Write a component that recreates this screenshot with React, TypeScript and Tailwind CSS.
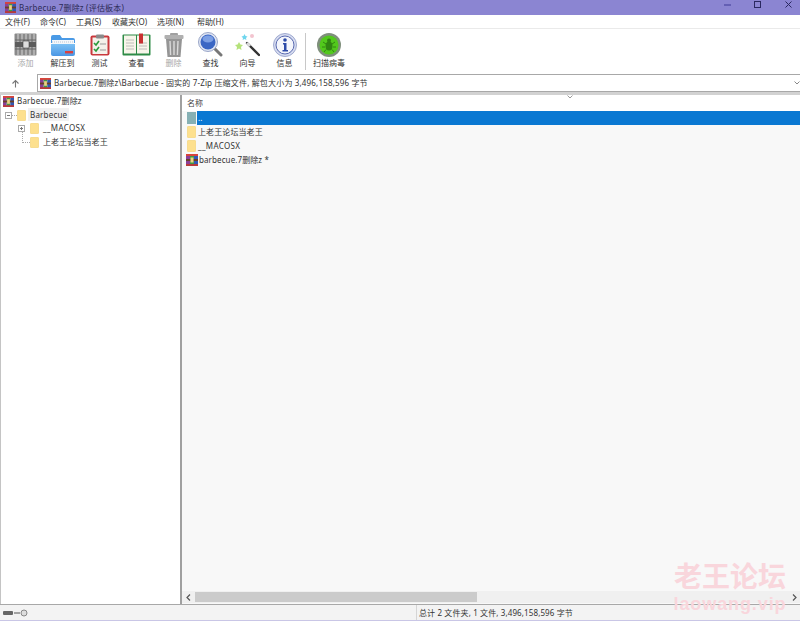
import React from "react";

const font = { fontFamily: '"Noto Sans", "Noto Sans CJK SC", "Liberation Sans", sans-serif' };

function Rar({ s = 12 }: { s?: number }) {
  return (
    <svg width={s} height={s} viewBox="0 0 12 12" className="shrink-0">
      <rect x="0" y="0" width="4" height="12" fill="#8a3f98" />
      <rect x="4" y="0" width="4" height="12" fill="#3f9a45" />
      <rect x="8" y="0" width="4" height="12" fill="#3258b4" />
      <rect x="0" y="0" width="12" height="2" fill="#d8443a" />
      <rect x="0" y="5" width="12" height="2" fill="#6a4028" />
      <rect x="4.500" y="3.500" width="3" height="5" fill="#ecd084" />
      <rect x="0" y="10" width="12" height="2" fill="#b83a3a" />
    </svg>
  );
}

function Folder({ w = 9, h = 11 }: { w?: number; h?: number }) {
  return <span className="inline-block shrink-0 rounded-[1px] bg-[#fde08e] border border-[#f7dc90]" style={{ width: w, height: h }} />;
}

function Tool({ label, dim, w = "w-[37px]", children }: { label: string; dim?: boolean; w?: string; children: React.ReactNode }) {
  return (
    <div className={`flex flex-col items-center shrink-0 ${w}`}>
      <div className="h-[25px] flex items-center justify-center">{children}</div>
      <span className={`text-[8px] leading-[11px] whitespace-nowrap ${dim ? "text-[#a8a8a8]" : "text-[#333]"}`}>{label}</span>
    </div>
  );
}

export default function App() {
  return (
    <div className="relative w-[800px] h-[621px] overflow-hidden flex flex-col bg-white text-[#333]" style={font}>
      {/* Title bar */}
      <div className="h-[15px] bg-[#8b85d2] flex items-center shrink-0">
        <div className="pl-[5px] flex items-center gap-[3px]">
          <Rar s={11} />
          <span className="text-[8px] leading-[15px] text-[#2c2a55] tracking-[0.2px]">Barbecue.7删除z (评估板本)</span>
        </div>
        <svg width="100" height="15" viewBox="0 0 100 15" className="ml-auto">
          <path d="M24 5h7" stroke="#4a46a0" strokeWidth="1.200" />
          <rect x="54.500" y="1.500" width="6" height="6" fill="none" stroke="#2a2860" strokeWidth="1" />
          <path d="M85.500 1.500l6 6M91.500 1.500l-6 6" stroke="#2a2860" strokeWidth="1" />
        </svg>
      </div>
      {/* Menu */}
      <div className="h-[14px] bg-white flex items-center shrink-0 pl-[5px] text-[8px] leading-[13px] text-[#333] border-b border-[#eaeaea]">
        <span className="w-[35px]">文件(F)</span>
        <span className="w-[36px]">命令(C)</span>
        <span className="w-[36px]">工具(S)</span>
        <span className="w-[45px]">收藏夹(O)</span>
        <span className="w-[40px]">选项(N)</span>
        <span>帮助(H)</span>
      </div>
      {/* Toolbar */}
      <div className="h-[45px] bg-white flex items-start shrink-0 pl-[7px] pt-[3px]">
        <Tool label="添加" dim>
          <svg width="23" height="23" viewBox="0 0 23 23">
            <rect x="0.500" y="0.500" width="22" height="22" rx="1" fill="#8a8a8a" />
            <path d="M4 1v21M8 1v21M12 1v21M16 1v21M20 1v21" stroke="#c4c4c4" strokeWidth="1.300" />
            <path d="M1 7h21M1 16h21" stroke="#666" strokeWidth="1" />
            <rect x="1" y="9" width="21" height="5" fill="#5c5c5c" />
            <rect x="9" y="8" width="6" height="7" fill="#dedede" stroke="#444" strokeWidth=".6" />
          </svg>
        </Tool>
        <Tool label="解压到">
          <svg width="26" height="22" viewBox="0 0 26 22">
            <defs>
              <linearGradient id="fb" x1="0" y1="0" x2="0" y2="1">
                <stop offset="0" stopColor="#7cc0f4" />
                <stop offset="1" stopColor="#4a96e4" />
              </linearGradient>
            </defs>
            <path d="M1 3q0-2 2-2h7l2 3h11q2 0 2 2v3H1z" fill="#4a9ae6" />
            <rect x="2" y="6" width="22" height="7" fill="#f4f7fb" />
            <path d="M2 8h22" stroke="#9ab" strokeDasharray="1 1" strokeWidth=".6" />
            <path d="M1 10h24v10q0 2-2 2H3q-2 0-2-2z" fill="url(#fb)" />
            <rect x="15" y="17" width="8" height="2.400" fill="#d84040" />
          </svg>
        </Tool>
        <Tool label="测试">
          <svg width="20" height="22" viewBox="0 0 20 22">
            <rect x="0.500" y="1.500" width="19" height="20" rx="2" fill="#c9383c" />
            <rect x="2.500" y="3.500" width="15" height="16.500" fill="#f4f1ea" />
            <rect x="6" y="0.500" width="8" height="4" rx="1" fill="#8a8a8a" />
            <path d="M4 9l2 2 3-4" stroke="#2a9a3a" strokeWidth="1.600" fill="none" />
            <path d="M4 15l2 2 3-4" stroke="#2a9a3a" strokeWidth="1.600" fill="none" />
            <path d="M10 10h6M10 16h6" stroke="#999" />
          </svg>
        </Tool>
        <Tool label="查看">
          <svg width="29" height="23" viewBox="0 0 29 23">
            <rect x="0.500" y="1.500" width="28" height="21" rx="1" fill="#2e8b47" />
            <rect x="2" y="2.500" width="12" height="18" fill="#f7f5ea" />
            <rect x="15" y="2.500" width="12" height="18" fill="#f7f5ea" />
            <path d="M4 7h8M4 10h8M4 13h8M4 16h8M17 10h8M17 13h8M17 16h8" stroke="#b0b0b0" strokeWidth=".8" />
            <rect x="17" y="0.500" width="4" height="10" fill="#c83030" />
          </svg>
        </Tool>
        <Tool label="删除" dim>
          <svg width="20" height="24" viewBox="0 0 20 24">
            <rect x="6" y="0" width="8" height="2.500" rx="1" fill="#a0a0a0" />
            <rect x="0.500" y="2" width="19" height="4" rx="1" fill="#b0b0b0" />
            <path d="M2 6h16l-1.500 18h-13z" fill="#959595" />
            <path d="M6 8l.6 14M10 8v14M14 8l-.6 14" stroke="#dadada" strokeWidth="1.400" />
          </svg>
        </Tool>
        <Tool label="查找">
          <svg width="25" height="25" viewBox="0 0 25 25">
            <path d="M15 15l8 8" stroke="#777" strokeWidth="3" strokeLinecap="round" />
            <circle cx="10" cy="10" r="9.500" fill="#dfe5f2" stroke="#9aa6c8" />
            <circle cx="10" cy="10" r="7.500" fill="#3a66c4" />
            <ellipse cx="10" cy="7" rx="5.500" ry="3.500" fill="#7da0e4" />
          </svg>
        </Tool>
        <Tool label="向导">
          <svg width="25" height="24" viewBox="0 0 25 24">
            <path d="M12 10l12 12" stroke="#333" strokeWidth="2.400" strokeLinecap="round" />
            <path d="M12 10l3 3" stroke="#ddd" strokeWidth="2.400" />
            <path d="M4 9l1.400 2.600L8 12l-2 2 .5 3L4 15.500 1.500 17l.5-3-2-2 2.600-.4z" fill="#b5e27a" />
            <path d="M9.500 1l1 2 2 .4-1.500 1.500.4 2L9.500 6l-1.900 1 .4-2-1.500-1.600 2-.4z" fill="#6fd6ee" />
            <circle cx="17" cy="3" r="2" fill="#f3c4cf" />
          </svg>
        </Tool>
        <Tool label="信息">
          <svg width="24" height="24" viewBox="0 0 24 24">
            <circle cx="12" cy="12" r="11.500" fill="#d6dcf0" stroke="#a0aad0" />
            <circle cx="12" cy="12" r="9" fill="#f4f6fc" stroke="#5a6ab0" />
            <circle cx="12" cy="7" r="1.800" fill="#2c4aa8" />
            <path d="M10 10h3.500v7H15v1.500H9.500V17H11v-5.500h-1z" fill="#2c4aa8" />
          </svg>
        </Tool>
        <div className="w-[1px] h-[37px] bg-[#c8c8c8] mt-[1px] ml-[2px] shrink-0" />
        <Tool label="扫描病毒" w="w-[46px]">
          <svg width="24" height="24" viewBox="0 0 24 24">
            <circle cx="12" cy="12" r="12" fill="#7f8f7c" />
            <circle cx="12" cy="12" r="9.500" fill="#52c81c" />
            <ellipse cx="12" cy="13" rx="3.500" ry="4.500" fill="#308412" />
            <circle cx="12" cy="7.500" r="2" fill="#308412" />
            <path d="M6 9l3 2M18 9l-3 2M5 14h3M19 14h-3M7 19l2-2.500M17 19l-2-2.500" stroke="#308412" strokeWidth="1" />
          </svg>
        </Tool>
      </div>
      {/* Address */}
      <div className="h-[18px] bg-white flex items-center shrink-0">
        <div className="w-[37px] flex justify-center pr-[7px]">
          <svg width="9" height="9" viewBox="0 0 9 9"><path d="M4.500 8.500V1.500M1.500 4.500l3-3 3 3" stroke="#777" strokeWidth="1.100" fill="none" /></svg>
        </div>
        <div className="flex-1 h-[18px] border-y border-l border-[#a8a8a8] flex items-center pl-[2px] gap-[3px]">
          <Rar s={11} />
          <span className="text-[8px] leading-[16px] text-[#333] whitespace-nowrap tracking-[0.17px]">Barbecue.7删除z\Barbecue - 固实的 7-Zip 压缩文件, 解包大小为 3,496,158,596 字节</span>
          <svg width="6" height="4" viewBox="0 0 6 4" className="ml-auto"><path d="M.5.500l2.500 2.500 2.500-2.500" stroke="#888" fill="none" /></svg>
        </div>
      </div>
      <div className="h-[3px] bg-[#d2d2d2] shrink-0" />
      {/* Panels */}
      <div className="flex-1 flex min-h-0 bg-white">
        {/* Tree */}
        <div className="relative w-[182px] shrink-0 border-l border-r-2 border-[#a0a0a0] border-l-[#c4c4c4] bg-white text-[8px]">
          <span className="absolute left-[21px] top-[36px] h-[12px] border-l border-dotted border-[#aaa]" />
          <span className="absolute left-[21px] top-[47px] w-[8px] border-t border-dotted border-[#aaa]" />
          <div className="flex items-center h-[13px] pl-[2px] gap-[3px]">
            <Rar s={11} />
            <span className="leading-[13px] mb-[2px] tracking-[0.2px]">Barbecue.7删除z</span>
          </div>
          <div className="flex items-center h-[14px] pl-[4px]">
            <span className="w-[7px] h-[7px] border border-[#aaa] flex items-center justify-center shrink-0">
              <span className="w-[3px] h-[1px] bg-[#777]" />
            </span>
            <span className="w-[5px] h-[1px] border-t border-dotted border-[#aaa]" />
            <Folder />
            <span className="ml-[2px] px-[2px] bg-[#f1f1f1] leading-[13px] mb-[2px] tracking-[0.2px]">Barbecue</span>
          </div>
          <div className="flex items-center h-[13px] pl-[17px]">
            <span className="relative w-[7px] h-[7px] border border-[#aaa] flex items-center justify-center shrink-0">
              <span className="w-[3px] h-[1px] bg-[#777]" />
              <span className="absolute w-[1px] h-[3px] bg-[#777]" />
            </span>
            <span className="w-[5px]" />
            <Folder />
            <span className="ml-[4px] leading-[13px] mb-[2px] tracking-[0.35px]">__MACOSX</span>
          </div>
          <div className="flex items-center h-[14px] pl-[29px]">
            <Folder />
            <span className="ml-[4px] leading-[13px] mb-[2px] tracking-[0.1px]">上老王论坛当老王</span>
          </div>
        </div>
        {/* List */}
        <div className="flex-1 min-w-0 flex flex-col bg-[#f8f8f8]">
          <div className="h-[16px] shrink-0 bg-white">
            <div className="w-[391px] h-[16px] flex items-center justify-between pl-[5px] text-[8px] text-[#444] leading-[15px]">
              <span className="mb-[1px]">名称</span>
              <svg width="6" height="4" viewBox="0 0 6 4" className="mb-[12px]"><path d="M.5.500l2.500 2.500 2.500-2.500" stroke="#999" fill="none" /></svg>
            </div>
          </div>
          <div className="h-[14px] shrink-0 flex items-center pl-[5px]">
            <span className="w-[9px] h-[12px] bg-[#86b0b4] shrink-0" />
            <span className="ml-[1px] flex-1 h-[14px] bg-[#0a78d2] text-white text-[8px] leading-[14px] pl-[1px]">..</span>
          </div>
          <div className="flex flex-col text-[8px]">
            <div className="h-[14px] flex items-center pl-[5px] gap-[2px]"><Folder h={12} /><span className="tracking-[0.1px]">上老王论坛当老王</span></div>
            <div className="h-[14px] flex items-center pl-[5px] gap-[2px]"><Folder h={12} /><span className="tracking-[0.35px]">__MACOSX</span></div>
            <div className="h-[14px] flex items-center pl-[4px] gap-[1px]"><Rar s={12} /><span className="tracking-[0.1px]">barbecue.7删除z *</span></div>
          </div>
          <div className="flex-1" />
          <div className="h-[12px] mb-[1px] shrink-0 flex items-center bg-[#f0f0f0]">
            <span className="w-[13px] flex justify-center">
              <svg width="5" height="7" viewBox="0 0 5 7"><path d="M4 .5l-3 3 3 3" stroke="#555" fill="none" strokeWidth="1.200" /></svg>
            </span>
            <div className="w-[282px] h-[10px] bg-[#cbcbcb]" />
            <span className="ml-auto w-[12px] flex justify-center">
              <svg width="5" height="7" viewBox="0 0 5 7"><path d="M1 .5l3 3-3 3" stroke="#555" fill="none" strokeWidth="1.200" /></svg>
            </span>
          </div>
        </div>
      </div>
      {/* Status */}
      <div className="h-[17px] shrink-0 flex items-center bg-[#f3f3f3] border-t border-[#a8a8a8] border-b border-b-[#c9c6e6]">
        <div className="pl-[3px] w-[416px] flex items-center gap-[1px]">
          <span className="w-[10px] h-[4px] bg-[#666] rounded-[1px]" />
          <svg width="14" height="8" viewBox="0 0 14 8"><path d="M0 4h6" stroke="#888" strokeWidth="1.500" /><circle cx="10" cy="4" r="3" fill="#ddd" stroke="#888" /></svg>
        </div>
        <div className="border-l border-[#d5d5d5] h-full pl-[2px] text-[8px] leading-[15px] text-[#333] whitespace-nowrap tracking-[0.12px]">总计 2 文件夹, 1 文件, 3,496,158,596 字节</div>
      </div>
      {/* Watermark */}
      <div className="absolute left-[674px] top-[561px] w-[112px] flex flex-col items-center pointer-events-none">
        <span className="text-[28px] leading-[30px] font-bold text-[#f9d6dc]">老王论坛</span>
        <span className="text-[18px] leading-[20px] mt-[3px] font-bold text-[#f9d6dc] tracking-[0.9px] whitespace-nowrap" style={{ fontFamily: '"Liberation Sans", sans-serif' }}>laowang.vip</span>
      </div>
    </div>
  );
}
